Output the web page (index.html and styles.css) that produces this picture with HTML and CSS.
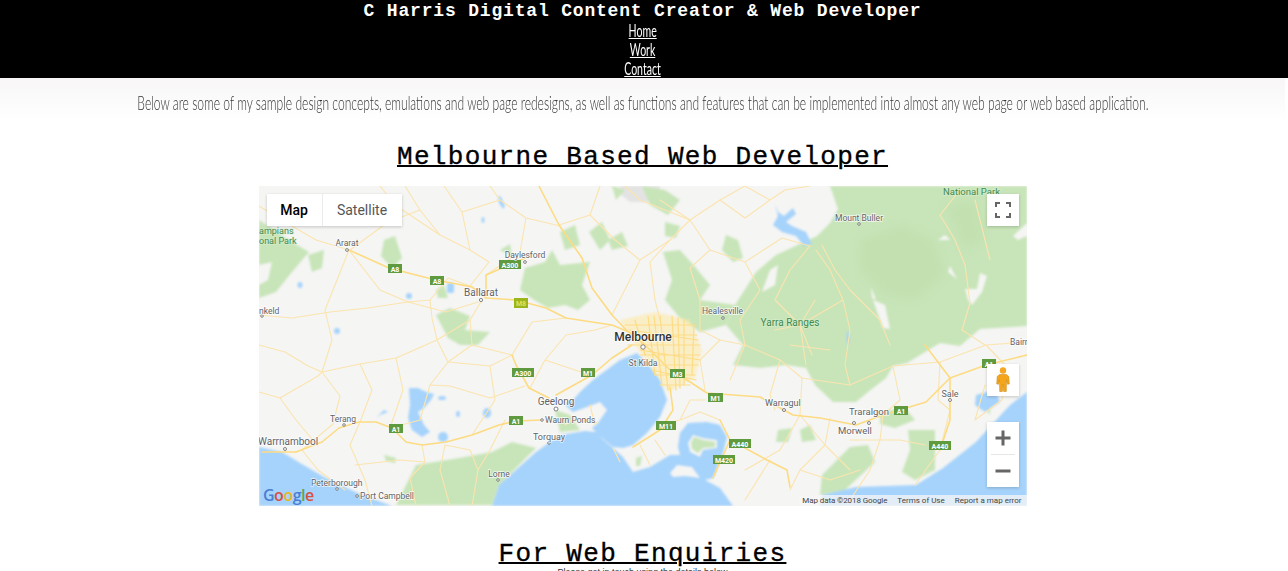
FILE: index.html
```html
<!DOCTYPE html>
<html lang="en">
<head>
<meta charset="utf-8">
<title>C Harris Digital Content Creator &amp; Web Developer</title>
<link rel="stylesheet" href="styles.css">
</head>
<body>
<header class="site-header">
  <div class="site-title">C Harris Digital Content Creator &amp; Web Developer</div>
  <nav class="site-nav">
    <a href="#" class="nav-link">Home</a>
    <a href="#" class="nav-link">Work</a>
    <a href="#" class="nav-link">Contact</a>
  </nav>
</header>
<div class="intro">
  <p class="intro-text">Below are some of my sample design concepts, emulations and web page redesigns, as well as functions and features that can be implemented into almost any web page or web based application.</p>
</div>
<main class="content">
  <h2 class="section-title">Melbourne Based Web Developer</h2>
  <div class="map">
    <svg class="map-canvas" viewBox="259 186 768 320" width="768" height="320" xmlns="http://www.w3.org/2000/svg">
      <rect x="259" y="186" width="768" height="320" fill="#f5f5f4"/>
      <g class="geo-soft">
        <polygon fill="#e3e3e3" points="620,186 660,186 660,196 648,202 630,202 620,194"/>
        <g fill="#c8e5b9">
          <polygon points="830,186 1027,186 1027,326 980,329 960,346 940,343 907,363 893,366 886,378 868,392 856,402 833,402 815,385 806,368 786,365 760,368 733,365 743,345 726,325 735,305 756,272 776,255 817,236 830,223 838,209"/>
          <polygon points="259,220 292,242 309,252 292,272 276,292 259,298"/>
          <polygon points="525,268 545,262 552,250 560,265 590,262 582,285 590,300 578,310 565,305 548,308 534,300 520,290"/>
          <polygon points="663,252 680,250 696,268 710,285 700,300 735,305 726,325 700,332 680,318 665,300 672,280"/>
          <polygon points="726,235 738,240 743,258 733,262 722,250"/>
          <polygon points="665,222 680,226 676,238 665,236"/>
          <polygon points="642,186 665,190 680,200 668,215 650,205"/>
          <polygon points="436,315 450,308 470,316 465,330 490,332 478,345 460,345 448,338"/>
          <polygon points="384,240 395,236 402,258 392,268 381,256"/>
          <polygon points="396,505 416,465 459,458 492,452 512,442 536,448 499,485 492,505"/>
          <polygon points="384,455 396,458 395,463 386,461"/>
          <polygon points="850,447 868,445 875,462 845,490 820,495 822,475"/>
          <polygon points="800,430 810,425 816,440 802,442"/>
          <polygon points="908,430 935,430 935,470 915,480 902,472 910,450"/>
          <polygon points="880,412 905,408 915,420 895,428 880,424"/>
          <polygon points="778,430 792,428 788,442 776,442"/>
          <polygon points="555,410 570,415 580,430 560,432"/>
          <polygon points="308,255 324,250 322,268 312,272"/>
          <polygon points="589,232 602,222 610,240 600,250"/>
          <polygon points="608,240 622,232 628,246 612,250"/>
          <polygon points="500,250 510,244 512,256"/>
          <polygon points="560,232 575,225 580,245 565,250"/>
          <polygon points="436,290 444,285 448,298 438,298"/>
          <polygon points="612,186 625,190 616,200"/>
          <polygon points="980,400 990,395 990,415"/>
        </g>
        <g class="forest-shade">
          <polygon points="860,240 900,225 935,240 945,275 915,300 885,295 860,270"/>
          <polygon points="945,205 975,200 985,240 965,250"/>
        </g>
        <g fill="#f5f5f4">
          <polygon points="259,265 272,262 268,280 259,285"/>
          <polygon points="965,289 977,289 980,273 987,276 982,292 972,305 968,300"/>
          <polygon points="950,266 957,279 948,272"/>
          <polygon points="1013,236 1027,223 1027,236 1018,240"/>
          <polygon points="871,287 876,300 872,298"/>
          <polygon points="873,300 885,305 890,329 883,328"/>
          <polygon points="945,235 950,240 938,240"/>
          <polygon points="770,270 778,265 775,285 762,292"/>
        </g>
        <g fill="#a6d3fb">
          <polygon points="259,447 282,452 300,463 326,478 360,494 392,506 259,506"/>
          <polygon points="492,506 499,485 536,452 560,435 585,431 596,432 592,428 598,423 607,410 600,402 587,407 573,412 565,405 575,398 580,392 593,380 620,360 637,353 647,363 660,380 667,400 660,417 647,433 633,445 623,448 613,447 602,438 599,436 613,448 623,457 633,472 650,467 670,455 680,455 678,447 680,433 688,423 707,422 720,425 727,437 723,453 713,478 705,480 720,488 733,506"/>
          <polygon points="820,506 822,495 856,487 916,485 943,468 976,442 1010,405 1027,392 1027,506"/>
          <polygon points="976,395 995,390 1000,402 985,412 975,405"/>
          <polygon points="775,204 778,212 784,216 793,208 796,214 786,222 792,226 806,232 812,244 804,246 796,236 782,232 773,225 778,216"/>
          <rect x="447" y="283" width="7" height="10" rx="2"/>
          <polygon points="498,196 501,197 505,206 503,209 499,203"/>
          <ellipse cx="483" cy="220" rx="1.500" ry="3"/>
          <ellipse cx="300" cy="285" rx="2.500" ry="3"/>
          <ellipse cx="409" cy="296" rx="3" ry="3"/>
          <ellipse cx="337" cy="331" rx="3" ry="3"/>
          <polygon points="409,388 418,388 426,392 434,394 431,400 424,408 418,412 424,425 430,432 422,437 412,430 408,418 410,405"/>
          <ellipse cx="442" cy="398" rx="4" ry="2"/>
          <ellipse cx="487" cy="413" rx="4" ry="5"/>
          <ellipse cx="443" cy="437" rx="5" ry="5"/>
          <ellipse cx="458" cy="414" rx="2" ry="3"/>
          <polygon points="380,415 376,418 384,410 388,412"/>
          <ellipse cx="848" cy="338" rx="1.500" ry="7"/>
        </g>
        <g fill="#f5f5f4">
          <polygon points="670,473 677,465 692,467 700,478 685,476 673,477"/>
          <polygon points="688,443 693,435 703,438 717,440 717,448 703,450 700,457 690,452"/>
        </g>
        <g fill="#c8e5b9">
          <polygon points="691,443 694,437 703,440 715,442 715,447 703,448 698,453 692,449"/>
          <polygon points="636,458 642,456 640,466 636,466"/>
        </g>
        <polygon fill="#fde9a9" opacity=".6" points="620,320 655,312 690,320 702,350 695,378 668,392 657,375 640,352"/>
      </g>
      <g class="geo-lines">
        <g class="roads-minor">
          <path d="M259 206L285 222 316 240 349 250 337 280 325 310 332 340 322 372 340 396 333 424 302 450 318 470 345 490"/>
          <path d="M259 315L292 318 330 312 368 308 408 302 446 312 478 302"/>
          <path d="M259 345L285 352 308 366 322 372 360 364 396 358 437 340 470 320 482 300"/>
          <path d="M259 392L280 398 296 420 318 446M280 398L318 376 322 372"/>
          <path d="M360 364L372 390 360 422 350 445 365 480 372 506M396 358L403 390 390 428"/>
          <path d="M437 340L448 362 430 385 450 386 490 398 525 386M430 385L420 420 390 428M448 362L490 366 512 355"/>
          <path d="M470 320L472 345 448 362M472 345L512 355 532 322 566 318M490 366L495 400 472 435"/>
          <path d="M445 445L440 470 450 506M445 445L470 450 478 470 472 506M505 420L490 450 478 470M422 445L425 462 410 478 416 506M355 465L400 460 425 462"/>
          <path d="M405 186L420 210 440 235 470 250 489 262 470 286M380 186L395 205 440 235M420 210L388 222 350 250"/>
          <path d="M444 186L462 212 470 250M462 212L500 200 526 218 560 226M500 200L490 186M526 218L520 252 486 275"/>
          <path d="M470 286L448 278 430 300 408 302 380 290 349 250M430 300L432 318 437 340"/>
          <path d="M600 186L590 215 559 225M590 215L615 240 640 260 612 315M640 260L670 240 690 220 660 200M690 220L720 200 745 186"/>
          <path d="M625 186L640 200 690 220 710 250 745 262 782 238 810 246M745 262L760 290 740 320 745 345M670 240L650 262 655 300 660 320"/>
          <path d="M710 250L690 268 700 300 700 330 720 340 745 345 780 360 802 378 850 385 893 366M745 345L730 380"/>
          <path d="M720 340L700 360 705 390M780 360L770 395 775 410M802 378L800 415 780 450 745 470"/>
          <path d="M745 186L770 200 785 190 810 186M770 200L745 218 720 200M810 246L790 270 775 300 800 325 806 365"/>
          <path d="M816 250L830 270 843 300 850 330 845 365 850 385M843 300L800 325 775 330"/>
          <path d="M893 366L900 400 883 415 880 440 870 470 850 500M830 418L825 445 850 470M800 415L825 445 800 470 790 490"/>
          <path d="M893 366L940 362 986 345 1027 342M940 362L938 400 950 410 940 450 915 485M986 345L1005 365 1002 400 975 420M985 385L975 420"/>
          <path d="M770 460L745 500M800 470L830 480 860 470M850 440L900 440 925 445"/>
          <path d="M940 215L955 240 965 265 970 303 962 330 985 345M975 200L990 260M960 190L940 215"/>
          <path d="M822 245L835 270 850 290 880 320 890 345M815 300L800 325 812 355M790 345L830 350"/>
          <path d="M613 448L620 462M640 445L650 465M655 440L665 455M660 425L680 420 700 412 720 420M680 420L690 400 705 400"/>
          <path d="M598 423L575 418 565 425M590 405L595 425"/>
          <path d="M566 335L545 360 530 388M566 335L595 330 612 325M545 360L590 375"/>
        </g>
        <g class="roads-major">
          <path d="M349 250L389 268 416 275 436 280 472 287 486 298 516 300 546 308 566 318 592 322 612 325 629 332 643 343"/>
          <path d="M486 298L486 275 509 265 525 258"/>
          <path d="M539 186L559 225 582 258 592 288 612 315 632 336"/>
          <path d="M296 452L322 442 339 428 359 422 376 422 392 428 406 442 422 445 446 442 472 435 499 425 516 421 542 420"/>
          <path d="M262 452L296 452"/>
          <path d="M512 355L516 365 529 388 549 398"/>
          <path d="M556 395L592 375 612 358 632 345"/>
          <path d="M643 343L670 370 687 380 707 393 760 397 793 415 820 418 856 425 883 415 926 402 950 378 986 365 1027 355"/>
          <path d="M670 387L673 410 660 430 633 447"/>
          <path d="M720 420L730 440 767 460 787 470 790 487"/>
          <path d="M730 440L713 478"/>
          <path d="M950 378L950 420 940 450"/>
          <path d="M950 378L925 345"/>
        </g>
      </g>
      <g class="roads-urban">
        <path d="M625 325L695 325M622 335L697 335M628 345L700 345M640 355L700 355M650 365L698 365M655 375L695 375M660 385L690 385M630 330L698 340M640 350L700 360M652 370L696 380"/>
        <path d="M635 320L645 355M648 316L655 375M660 316L668 390M672 316L676 390M684 320L684 385M694 325L692 375M654 316L662 385M678 318L680 388"/>
      </g>
      <g class="shield">
        <rect x="388" y="264" width="14" height="9"/><text x="395" y="271.500">A8</text>
        <rect x="430" y="276" width="14" height="9"/><text x="437" y="283.500">A8</text>
        <rect x="499" y="260" width="22" height="9"/><text x="510" y="267.500">A300</text>
        <rect class="shield-m8" x="514" y="298" width="14" height="10"/><text class="shield-m8-text" x="521" y="306">M8</text>
        <rect x="512" y="368" width="22" height="9"/><text x="523" y="375.500">A300</text>
        <rect x="581" y="368" width="14" height="9"/><text x="588" y="375.500">M1</text>
        <rect x="509" y="416" width="14" height="9"/><text x="516" y="423.500">A1</text>
        <rect x="389" y="424" width="14" height="9"/><text x="396" y="431.500">A1</text>
        <rect x="670" y="369" width="15" height="9"/><text x="677.500" y="376.500">M3</text>
        <rect x="708" y="393" width="15" height="9"/><text x="715.500" y="400.500">M1</text>
        <rect x="656" y="421" width="20" height="9"/><text x="666" y="428.500">M11</text>
        <rect x="729" y="439" width="22" height="9"/><text x="740" y="446.500">A440</text>
        <rect x="713" y="455" width="22" height="9"/><text x="724" y="462.500">M420</text>
        <rect x="894" y="406" width="14" height="9"/><text x="901" y="413.500">A1</text>
        <rect x="929" y="441" width="22" height="9"/><text x="940" y="448.500">A440</text>
        <rect x="982" y="359" width="14" height="9"/><text x="989" y="366.500">A1</text>
      </g>
      <g class="marker">
        <circle cx="347" cy="250" r="1.400"/><circle cx="481" cy="300" r="1.600"/><circle cx="525" cy="262" r="1.400"/>
        <circle cx="262" cy="316" r="1.300"/><circle cx="643" cy="347" r="2.200"/><circle cx="723" cy="318" r="1.300"/>
        <circle cx="859" cy="224" r="1.300"/><circle cx="285" cy="449" r="1.500"/><circle cx="344" cy="425" r="1.300"/>
        <circle cx="556" cy="409" r="2"/><circle cx="542" cy="420" r="1.300"/><circle cx="549" cy="443" r="1.300"/>
        <circle cx="498" cy="480" r="1.300"/><circle cx="337" cy="489" r="1.300"/><circle cx="357" cy="496" r="1.300"/>
        <circle cx="784" cy="410" r="1.500"/><circle cx="869" cy="423" r="1.500"/><circle cx="854" cy="423" r="1.500"/>
        <circle cx="950" cy="400" r="1.500"/>
      </g>
      <g class="label">
        <text x="347" y="246" text-anchor="middle" font-size="8.500">Ararat</text>
        <text x="525" y="258" text-anchor="middle" font-size="8.500">Daylesford</text>
        <text x="481" y="296" text-anchor="middle" font-size="10">Ballarat</text>
        <text x="259" y="314" font-size="8.500">nkeld</text>
        <text x="859" y="221" text-anchor="middle" font-size="8.500">Mount Buller</text>
        <text x="702" y="314" font-size="8.500">Healesville</text>
        <text x="643" y="366" text-anchor="middle" font-size="8.500">St Kilda</text>
        <text x="1010" y="345" font-size="8.500">Bairn</text>
        <text x="330" y="422" font-size="8.500">Terang</text>
        <text x="258" y="445" font-size="10">Warrnambool</text>
        <text x="556" y="405" text-anchor="middle" font-size="10">Geelong</text>
        <text x="545" y="423" font-size="8.500">Waurn Ponds</text>
        <text x="549" y="440" text-anchor="middle" font-size="9">Torquay</text>
        <text x="499" y="477" text-anchor="middle" font-size="8.500">Lorne</text>
        <text x="311" y="486" font-size="8.500">Peterborough</text>
        <text x="360" y="499" font-size="8.500">Port Campbell</text>
        <text x="765" y="406" font-size="9">Warragul</text>
        <text x="849" y="415" font-size="9.500">Traralgon</text>
        <text x="838" y="434" font-size="9.500">Morwell</text>
        <text x="950" y="397" text-anchor="middle" font-size="9">Sale</text>
        <text x="643" y="341" text-anchor="middle" font-size="12" class="label-city">Melbourne</text>
        <text x="790" y="326" text-anchor="middle" font-size="10" class="label-green">Yarra Ranges</text>
        <text x="943" y="195" font-size="9.500" class="label-green">National Park</text>
        <text x="259" y="234" font-size="9" class="label-green">ampians</text>
        <text x="259" y="244" font-size="9" class="label-green">onal Park</text>
      </g>
      <text class="google-logo" x="263" y="501"><tspan class="g-blue">G</tspan><tspan class="g-red">o</tspan><tspan class="g-yellow">o</tspan><tspan class="g-blue">g</tspan><tspan class="g-green">l</tspan><tspan class="g-red">e</tspan></text>
    </svg>

    <div class="map-type">
      <span class="map-type-btn is-active">Map</span>
      <span class="map-type-btn">Satellite</span>
    </div>
    <button class="ctrl ctrl-fullscreen" aria-label="Fullscreen">
      <svg width="16" height="16" viewBox="0 0 16 16"><path d="M1 5V1h4M11 1h4v4M15 11v4h-4M5 15H1v-4" fill="none" stroke="#666" stroke-width="2"/></svg>
    </button>
    <button class="ctrl ctrl-pegman" aria-label="Street View">
      <svg width="14" height="26" viewBox="0 0 14 26">
        <circle cx="7" cy="3.500" r="3.200" fill="#f5a623"/>
        <path d="M3.500 7.500h7l2.300 2 .5 7.500-1.800.3-1-4.500-.2 11.700H7.600l-.6-7-.6 7H3.700L3.500 12.800l-1 4.500-1.800-.3.5-7.500z" fill="#f3a51b" stroke="#c98712" stroke-width=".5"/>
      </svg>
    </button>
    <div class="zoom-ctrl">
      <button class="zoom-btn" aria-label="Zoom in"><svg width="16" height="16" viewBox="0 0 16 16"><path d="M6.500 0.500h3v6h6v3h-6v6h-3v-6h-6v-3h6z" fill="#666"/></svg></button>
      <span class="zoom-sep"></span>
      <button class="zoom-btn" aria-label="Zoom out"><svg width="16" height="16" viewBox="0 0 16 16"><rect x="0.500" y="6.500" width="15" height="3" fill="#666"/></svg></button>
    </div>
    <div class="attribution">
      <span>Map data ©2018 Google</span><span>Terms of Use</span><span>Report a map error</span>
    </div>
  </div>
  <h2 class="section-title section-title-second">For Web Enquiries</h2>
  <p class="enquiry">Please get in touch using the details below</p>
</main>
</body>
</html>
```
FILE: styles.css
```css
* { box-sizing: border-box; }
html, body { margin: 0; padding: 0; height: 571px; overflow: hidden; background: #fff; }
body { font-family: "Liberation Sans", sans-serif; padding-right: 3px; }

.site-header {
  height: 78px;
  margin-right: -3px;
  padding-right: 3px;
  background: #000;
  color: #fff;
  display: flex;
  flex-direction: column;
  align-items: center;
  overflow: hidden;
}
.site-title {
  font-family: "Liberation Mono", monospace;
  font-weight: 700;
  font-size: 18px;
  letter-spacing: 0.82px;
  line-height: 22px;
  white-space: nowrap;
  height: 21px;
}
.site-nav { display: flex; flex-direction: column; align-items: center; }
.nav-link {
  display: block;
  height: 19px;
  line-height: 19px;
  color: #fff;
  font-family: "Lato", sans-serif;
  font-size: 17px;
  font-weight: 400;
  text-decoration-thickness: 1px;
  text-underline-offset: 1px;
  transform: scaleX(0.62);
}
.intro {
  height: 42px;
  padding-top: 7px;
  background: linear-gradient(#f8f6f6, #ffffff);
  display: flex;
  justify-content: center;
  align-items: center;
  overflow: hidden;
}
.intro-text {
  margin: 0;
  flex: none;
  white-space: nowrap;
  font-family: "Lato", sans-serif;
  font-weight: 300;
  font-size: 19px;
  color: #333;
  transform: scaleX(0.636);
}
.content { display: flex; flex-direction: column; align-items: center; }
.section-title {
  margin: 20px 0 12px;
  font-family: "Liberation Mono", monospace;
  font-weight: 400;
  font-size: 26px;
  letter-spacing: 1.33px;
  line-height: 34px;
  color: #000;
  -webkit-text-stroke: 0.35px #000;
  text-decoration: underline;
  text-decoration-thickness: 2px;
  white-space: nowrap;
}
.section-title-second { margin: 31px 0 -4px; }
.enquiry {
  margin: 0;
  font-family: "Liberation Sans", sans-serif;
  font-size: 9px;
  line-height: 11px;
  color: #333;
}

.map { position: relative; width: 768px; height: 320px; overflow: hidden; font-family: Roboto, sans-serif; }
.map-canvas { display: block; }
.geo-soft { filter: blur(0.8px); }
.forest-shade { fill: #c2e0b0; filter: blur(4px); }
.geo-lines { filter: blur(0.35px); }
.geo-lines path, .roads-urban path { fill: none; stroke-linejoin: round; stroke-linecap: round; }
.roads-minor path { stroke: #fbe4ae; stroke-width: 1.1; }
.roads-urban { filter: blur(0.6px); }
.roads-urban path { stroke: #fddc86; stroke-width: 1.2; }
.roads-major path { stroke: #fddb82; stroke-width: 1.6; }
.shield rect { fill: #5f9a3e; }
.shield text { fill: #fff; font-family: Roboto, sans-serif; font-size: 7px; font-weight: 700; text-anchor: middle; }
.shield .shield-m8 { fill: #9bb51a; }
.shield .shield-m8-text { fill: #e8e05a; }
.marker circle { fill: #fff; stroke: #666; stroke-width: .8; }
.label text {
  font-family: Roboto, sans-serif;
  fill: #5f6368;
  stroke: rgba(255,255,255,.8);
  stroke-width: 1.5px;
  paint-order: stroke;
}
.label .label-city { fill: #333; font-weight: 500; }
.label .label-green { fill: #3f8a4f; stroke: rgba(220,240,210,.6); }
.google-logo { font-family: "Open Sans", sans-serif; font-size: 16px; font-weight: 600; letter-spacing: -0.5px; }
.g-blue { fill: #4a7fd4; }
.g-red { fill: #d9503f; }
.g-yellow { fill: #e9b820; }
.g-green { fill: #57a55a; }

.map-type {
  position: absolute;
  left: 8px;
  top: 8px;
  height: 32px;
  display: flex;
  background: #fff;
  box-shadow: 0 1px 3px rgba(0,0,0,.2);
  font-size: 14px;
}
.map-type-btn {
  display: flex;
  align-items: center;
  justify-content: center;
  color: #565656;
}
.map-type-btn:first-child { width: 56px; border-right: 1px solid #ebebeb; }
.map-type-btn:last-child { width: 79px; }
.map-type-btn.is-active { color: #000; font-weight: 500; }

.ctrl, .zoom-btn {
  border: 0;
  padding: 0;
  background: #fff;
  display: flex;
  align-items: center;
  justify-content: center;
}
.ctrl {
  position: absolute;
  right: 8px;
  width: 32px;
  height: 32px;
  box-shadow: 0 1px 3px rgba(0,0,0,.2);
}
.ctrl-fullscreen { top: 8px; }
.ctrl-pegman { top: 178px; }
.zoom-ctrl {
  position: absolute;
  right: 8px;
  top: 236px;
  width: 32px;
  height: 65px;
  background: #fff;
  box-shadow: 0 1px 3px rgba(0,0,0,.2);
  display: flex;
  flex-direction: column;
  align-items: center;
}
.zoom-btn { width: 32px; height: 32px; }
.zoom-sep { width: 24px; height: 1px; background: #e6e6e6; flex: none; }
.attribution {
  position: absolute;
  right: 0;
  bottom: 0;
  height: 11px;
  padding: 0 5px 0 3px;
  display: flex;
  gap: 10px;
  background: rgba(245,245,245,.75);
  color: #444;
  font-size: 8px;
  line-height: 11px;
  white-space: nowrap;
}
.attribution span:first-child { letter-spacing: -0.1px; }
```
